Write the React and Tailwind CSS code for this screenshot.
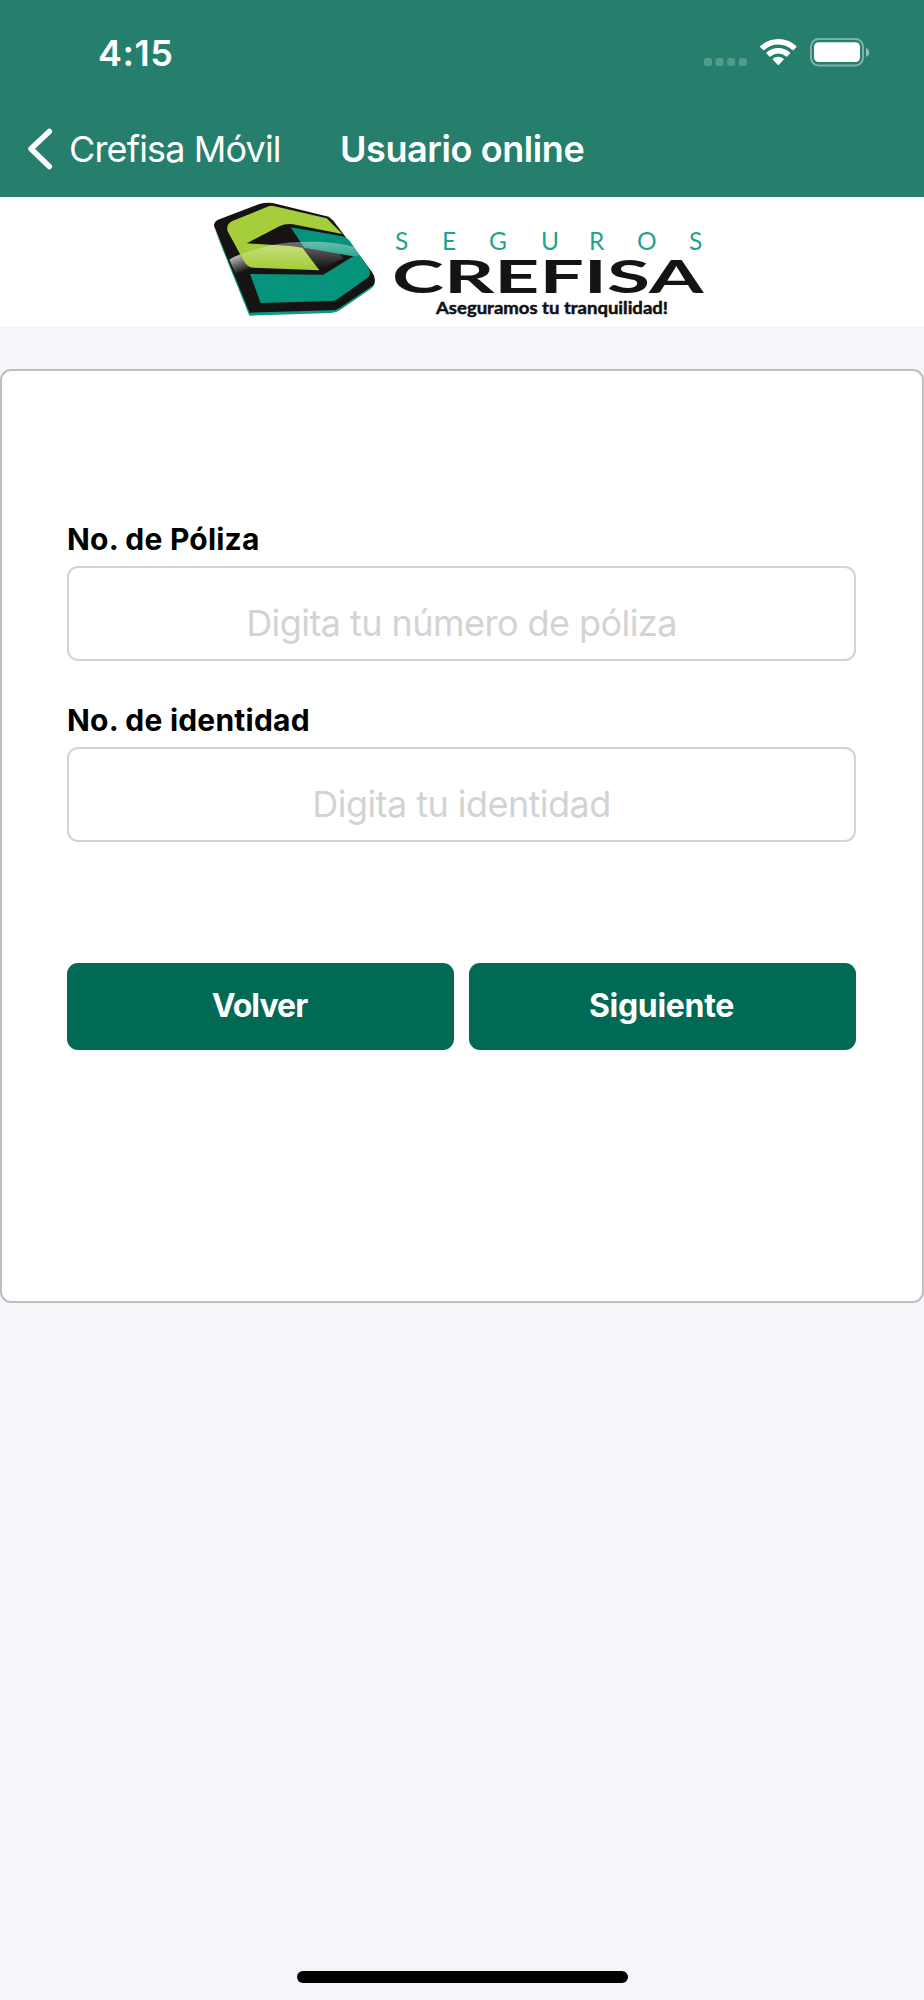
import { useState } from "react";

function SignalDots() {
  return (
    <svg width="43" height="28" viewBox="0 0 43 28" fill="#fff" fillOpacity="0.22">
      <rect x="0" y="20" width="8" height="8" rx="2.5" />
      <rect x="11.6" y="20" width="8" height="8" rx="2.5" />
      <rect x="23.2" y="20" width="8" height="8" rx="2.5" />
      <rect x="34.8" y="20" width="8" height="8" rx="2.5" />
    </svg>
  );
}

function WifiIcon() {
  return (
    <svg width="37" height="28" viewBox="0 0 37 28" fill="#fff">
      <path d="M18.3 1C11.3 1 4.9 3.7.3 8.1a.8.8 0 0 0 0 1.1l2.8 2.9c.3.3.8.3 1.1 0A20.4 20.4 0 0 1 18.3 6.5c5.5 0 10.4 2.1 14.1 5.6.3.3.8.3 1.1 0l2.8-2.9a.8.8 0 0 0 0-1.1A26 26 0 0 0 18.3 1z" />
      <path d="M18.3 9.900c-4.500 0-8.600 1.700-11.700 4.500a.8.8 0 0 0 0 1.200l2.800 2.800c.3.3.8.3 1.100 0a11.700 11.700 0 0 1 15.600 0c.3.3.8.3 1.100 0l2.800-2.800a.8.8 0 0 0 0-1.200 17.500 17.500 0 0 0-11.700-4.500z" />
      <path d="M18.3 18.800c-2.100 0-3.900.7-5.300 1.900-.4.3-.4.8-.1 1.100l4.800 5c.3.3.8.3 1.100 0l4.800-5c.3-.3.3-.8-.1-1.100a8.200 8.200 0 0 0-5.200-1.900z" />
    </svg>
  );
}

function BatteryIcon() {
  return (
    <svg width="60" height="29" viewBox="0 0 60 29" fill="none">
      <rect x="1" y="1" width="52" height="26.5" rx="7.5" stroke="#fff" strokeOpacity="0.4" strokeWidth="2" />
      <rect x="4" y="4.3" width="46" height="19.8" rx="4.5" fill="#fff" />
      <path d="M56 10c2 .8 3.200 2.400 3.200 4.400s-1.200 3.600-3.200 4.400z" fill="#fff" fillOpacity="0.5" />
    </svg>
  );
}

function StatusBar() {
  return (
    <div className="flex h-[104px] items-start justify-between pl-[98px] pr-[54px] pt-[34px] text-white">
      <span className="text-[36px] leading-[38px] font-semibold tracking-[0.5px]">4:15</span>
      <div className="flex items-start gap-[13px] pt-1">
        <SignalDots />
        <WifiIcon />
        <BatteryIcon />
      </div>
    </div>
  );
}

function NavBar() {
  return (
    <div className="flex h-[93px] items-start pl-[27px] pt-6 text-white">
      <svg width="26" height="42" viewBox="0 0 26 42" fill="none" className="shrink-0">
        <path d="M22.3 3.5L4 20.8l18.3 17.7" stroke="#fff" strokeWidth="5.5" strokeLinecap="round" strokeLinejoin="round" />
      </svg>
      <span className="ml-[16px] w-[271px] shrink-0 text-[36px] leading-[42px] tracking-[-0.85px] whitespace-nowrap">
        Crefisa Móvil
      </span>
      <h1 className="text-[36px] leading-[42px] font-semibold tracking-[-0.42px] whitespace-nowrap">
        Usuario online
      </h1>
    </div>
  );
}

function Logo() {
  return (
    <svg width="510" height="129" viewBox="207 197 510 129">
      <defs>
        <linearGradient id="shine" gradientUnits="userSpaceOnUse" x1="0" y1="150" x2="0" y2="235">
          <stop offset="0" stopColor="#fff" stopOpacity="0.42" />
          <stop offset="1" stopColor="#fff" stopOpacity="0" />
        </linearGradient>
        <linearGradient id="corner" gradientUnits="userSpaceOnUse" x1="100" y1="198" x2="118" y2="250">
          <stop offset="0" stopColor="#fff" stopOpacity="0.75" />
          <stop offset="1" stopColor="#fff" stopOpacity="0" />
        </linearGradient>
      </defs>
      <g transform="translate(200 190) scale(0.33333)">
        <path d="M42 114L148 377L392 369Q408 369 420 360L512 297Q525 288 525 266L400 330L150 350Z" fill="#0b9c84" />
        <path d="M42 108Q42 95 54 89L178 42Q205 34 230 42L386 80L400 92L516 246Q529 264 522 284L422 352Q410 361 396 361L149 368Z" fill="#161412" />
        <path d="M88 209Q104 199 122 193L133 216Q142 232 160 233L160 250L106 250Z" fill="url(#corner)" />
        <path d="M97 93L206 49Q214 46 224 49L380 85L427 132L290 105Q262 97 238 109L140 160L272 168L307 173L358 241L160 233Q142 232 133 216L83 124Q77 103 97 93Z" fill="#a6cd3a" />
        <path d="M272 112L428 139Q444 144 453 158L506 234Q514 250 505 262L412 328Q406 333 396 333L182 339L150 252L370 254L460 199L313 173Z" fill="#05937b" />
        <path d="M122 193Q215 157 302 156Q390 152 462 170L480 196L460 199L420 192L430 204L358 241L160 233Q142 232 133 216Z" fill="url(#shine)" />
      </g>
      <text
        x="395 442 489 541 589 637 689"
        y="249.5"
        fontSize="24.5"
        fill="#1fa48c"
        className="font-['Lato'] font-normal"
      >
        SEGUROS
      </text>
      <text
        x="392"
        y="293"
        fontSize="46"
        fill="#161412"
        textLength="311.5"
        lengthAdjust="spacingAndGlyphs"
        className="font-['Lato'] font-bold"
      >
        CREFISA
      </text>
      <text
        x="436"
        y="313.5"
        fontSize="17.5"
        fill="#111"
        stroke="#111"
        strokeWidth="0.5"
        textLength="232"
        lengthAdjust="spacingAndGlyphs"
        className="font-['Lato'] font-bold"
      >
        Aseguramos tu tranquilidad!
      </text>
    </svg>
  );
}

function Field({ label, placeholder, value, onChange }) {
  return (
    <label className="block h-[181px]">
      <span className="block h-[46px] pt-px text-[30px] leading-[36px] font-bold tracking-[0.22px] text-black">
        {label}
      </span>
      <input
        value={value}
        onChange={onChange}
        placeholder={placeholder}
        className="block h-[95px] w-full rounded-[11px] border-2 border-[#d3d3d3] bg-white pt-[19px] text-center text-[36px] tracking-[-0.55px] text-black placeholder:text-[#d3d3d3] focus:outline-none"
      />
    </label>
  );
}

function Button({ className, children }) {
  return (
    <button className={`h-[87px] flex-1 rounded-[11px] bg-[#006a54] pr-[2px] pb-px text-[32px] leading-none font-bold text-white ${className}`}>
      {children}
    </button>
  );
}

export default function App() {
  const [policy, setPolicy] = useState("");
  const [identity, setIdentity] = useState("");

  return (
    <div className="flex h-[2000px] w-[924px] flex-col bg-[#f5f6fa] font-['Inter',sans-serif]">
      <header className="h-[197px] bg-[#257f6c]">
        <StatusBar />
        <NavBar />
      </header>

      <div className="flex h-[129px] justify-center bg-white">
        <Logo />
      </div>

      <main className="mt-[43px] h-[934px] rounded-[11px] border-2 border-[#bfbfbf] bg-white pr-[66px] pl-[65px] pt-[149px]">
        <Field
          label="No. de Póliza"
          placeholder="Digita tu número de póliza"
          value={policy}
          onChange={(e) => setPolicy(e.target.value)}
        />
        <Field
          label="No. de identidad"
          placeholder="Digita tu identidad"
          value={identity}
          onChange={(e) => setIdentity(e.target.value)}
        />

        <div className="mt-[81px] flex gap-[15px]">
          <Button className="tracking-[-0.95px]">Volver</Button>
          <Button className="tracking-[-0.3px]">Siguiente</Button>
        </div>
      </main>

      {/* Home indicator */}
      <div className="mx-auto mt-auto mb-[17px] h-[12px] w-[331px] rounded-full bg-black" />
    </div>
  );
}
